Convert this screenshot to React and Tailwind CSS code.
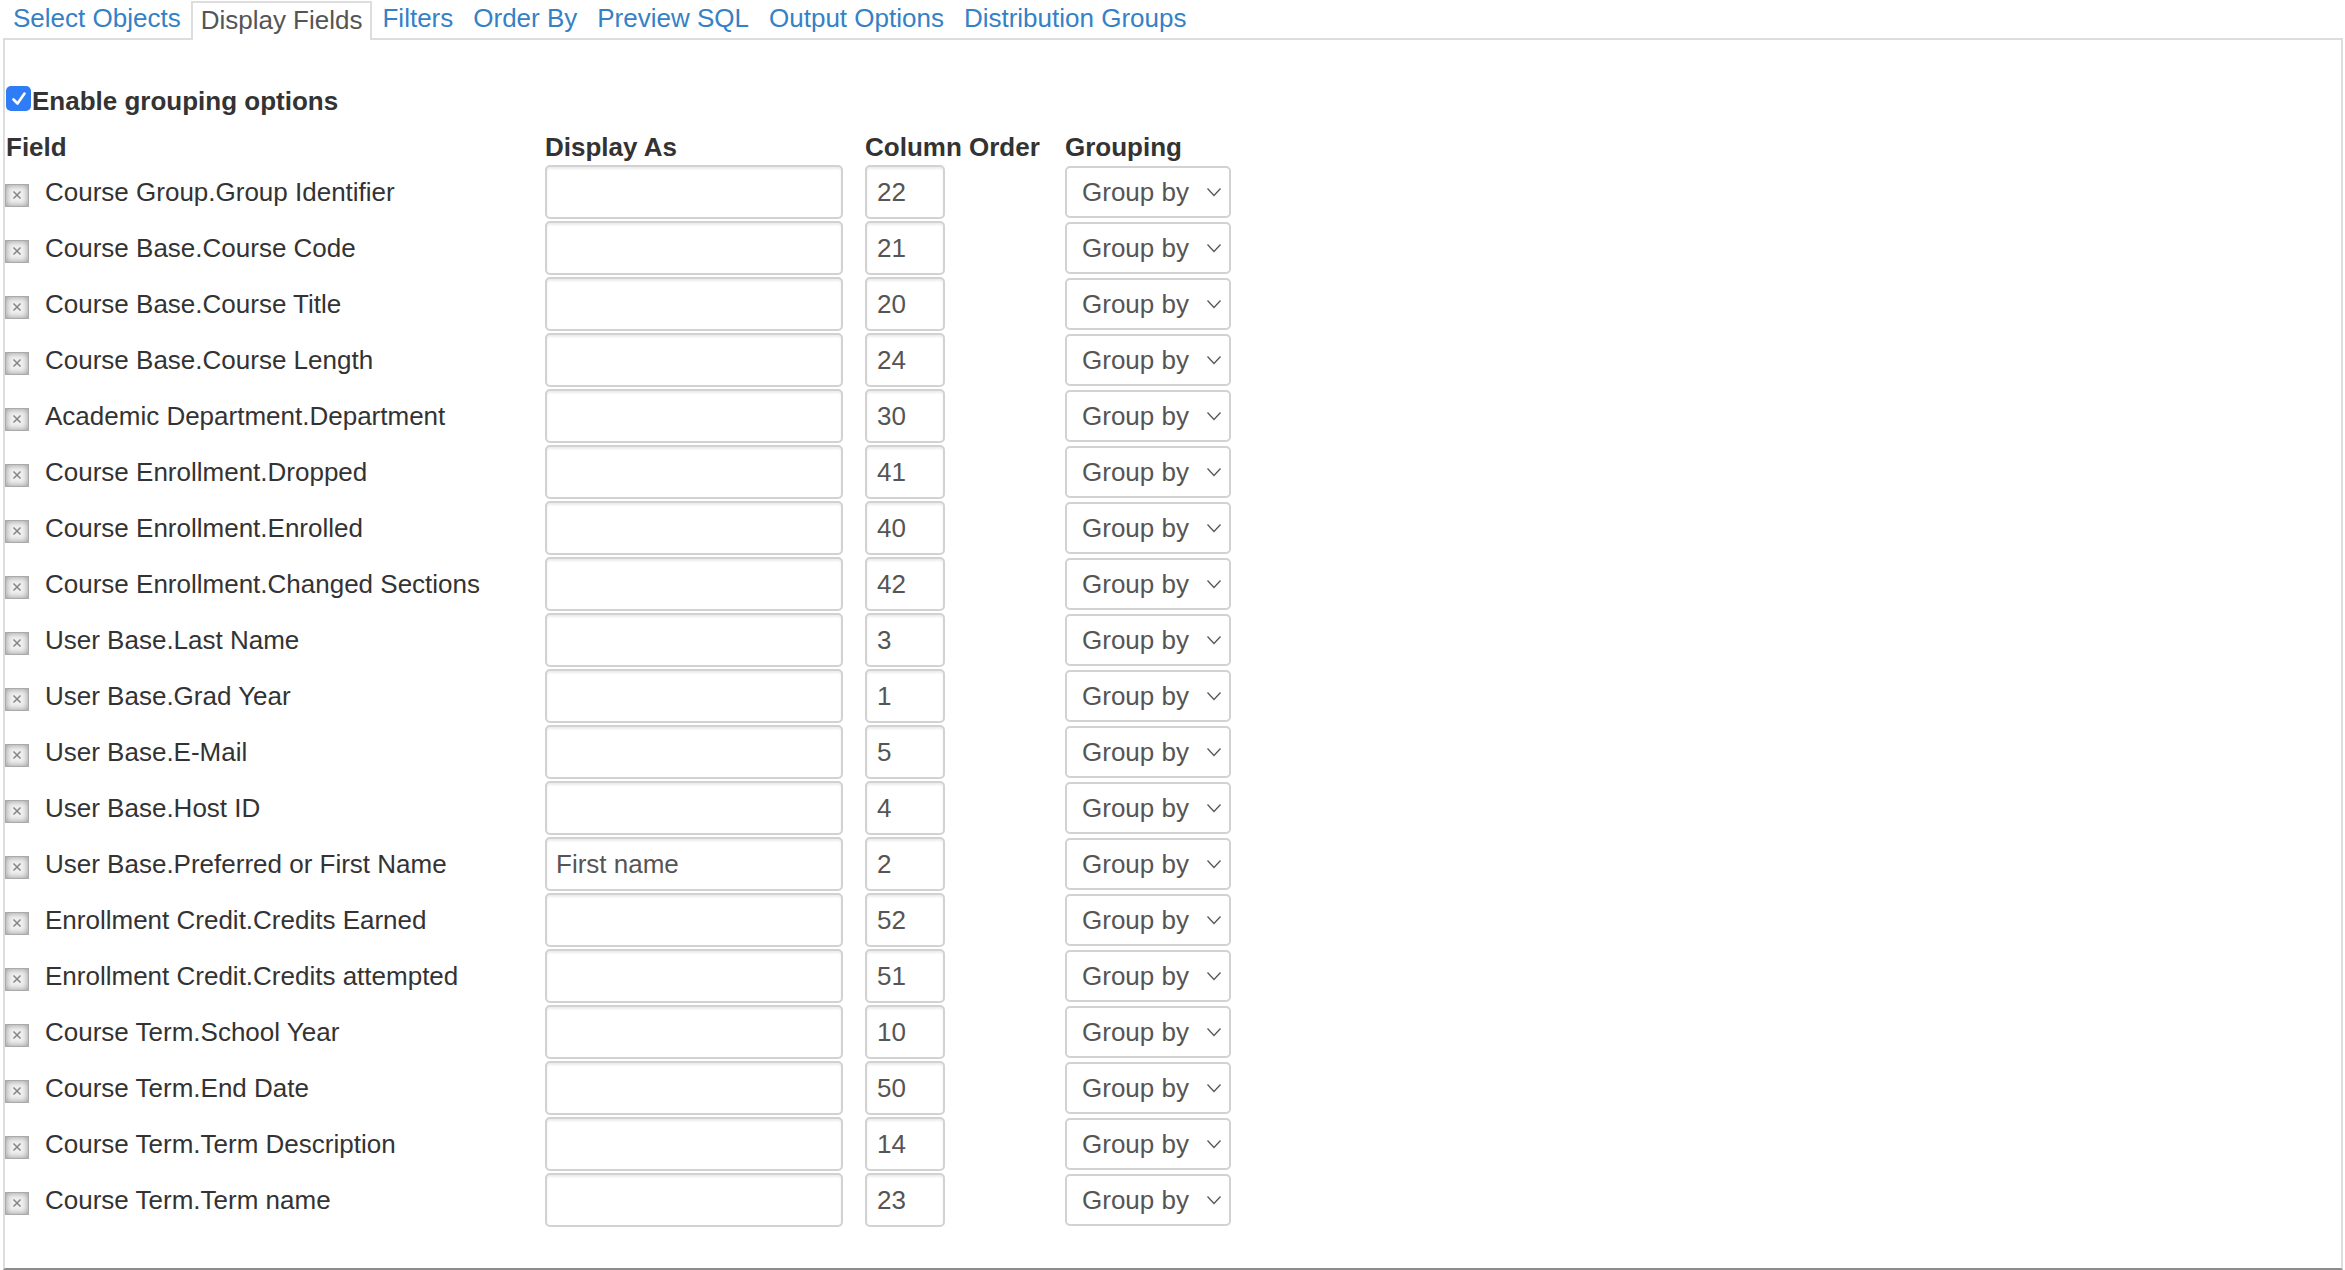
import React from "react";

const tabs = [
  "Select Objects",
  "Display Fields",
  "Filters",
  "Order By",
  "Preview SQL",
  "Output Options",
  "Distribution Groups",
];

const fields = [
  ["Course Group.Group Identifier", "", "22"],
  ["Course Base.Course Code", "", "21"],
  ["Course Base.Course Title", "", "20"],
  ["Course Base.Course Length", "", "24"],
  ["Academic Department.Department", "", "30"],
  ["Course Enrollment.Dropped", "", "41"],
  ["Course Enrollment.Enrolled", "", "40"],
  ["Course Enrollment.Changed Sections", "", "42"],
  ["User Base.Last Name", "", "3"],
  ["User Base.Grad Year", "", "1"],
  ["User Base.E-Mail", "", "5"],
  ["User Base.Host ID", "", "4"],
  ["User Base.Preferred or First Name", "First name", "2"],
  ["Enrollment Credit.Credits Earned", "", "52"],
  ["Enrollment Credit.Credits attempted", "", "51"],
  ["Course Term.School Year", "", "10"],
  ["Course Term.End Date", "", "50"],
  ["Course Term.Term Description", "", "14"],
  ["Course Term.Term name", "", "23"],
];

function RemoveIcon() {
  return (
    <div className="w-[24px] h-[23px] mt-[6px] flex-shrink-0 flex items-center justify-center border border-[#aaa] bg-[#f0f0f0] shadow-[inset_0_0_6px_rgba(0,0,0,0.4)]">
      <svg width="12" height="12" viewBox="0 0 12 12">
        <path d="M2.5 2.5L9.5 9.5M9.5 2.5L2.5 9.5" stroke="#858585" strokeWidth="1.5" />
      </svg>
    </div>
  );
}

function Row({ name, display, order }) {
  return (
    <div className="flex items-center h-[56px]">
      <div className="w-[540px] flex items-center">
        <RemoveIcon />
        <span className="ml-[16px] text-[26px] text-[#333]">{name}</span>
      </div>
      <div className="w-[320px]">
        <div className="w-[298px] h-[54px] border-2 border-[#d2d2d2] rounded-[5px] shadow-[inset_0_2px_2px_rgba(0,0,0,0.08)] bg-white flex items-center px-[9px] text-[26px] text-[#555]">
          {display}
        </div>
      </div>
      <div className="w-[200px]">
        <div className="w-[80px] h-[54px] border-2 border-[#d2d2d2] rounded-[5px] shadow-[inset_0_2px_2px_rgba(0,0,0,0.08)] bg-white flex items-center px-[10px] text-[26px] text-[#555]">
          {order}
        </div>
      </div>
      <div className="w-[166px] h-[52px] border-2 border-[#d2d2d2] rounded-[5px] bg-white flex items-center justify-between pl-[15px] pr-[7px] text-[26px] text-[#555]">
        <span>Group by</span>
        <svg width="16" height="10" viewBox="0 0 16 10">
          <path d="M1.5 1.5L8 8.5L14.5 1.5" fill="none" stroke="#555" strokeWidth="1.3" />
        </svg>
      </div>
    </div>
  );
}

export default function App() {
  return (
    <div className="w-[2345px] h-[1270px] flex flex-col pl-[3px] pr-[2px] bg-white font-['Liberation_Sans',Arial,sans-serif]">
      {/* Tabs */}
      <div className="flex items-end h-[38px] flex-shrink-0">
        {tabs.map((tab) =>
          tab === "Display Fields" ? (
            <div
              key={tab}
              className="relative z-10 -mb-[2px] h-[39px] px-[8px] pt-[3px] border-2 border-b-0 border-[#ddd] bg-white text-[26px] leading-[28px] text-[#555]"
            >
              {tab}
            </div>
          ) : (
            <div
              key={tab}
              className="h-[39px] -mb-[2px] px-[10px] pt-[3px] text-[26px] leading-[28px] text-[#3581c5]"
            >
              {tab}
            </div>
          )
        )}
      </div>

      {/* Panel */}
      <div className="flex-1 border-2 border-[#ddd] border-b-[#8c8c8c]">
        <div className="mt-[49px] flex items-center h-[25px]">
          <div className="w-[25px] h-[25px] -mt-[6px] ml-[1px] rounded-[5px] bg-[#2f7df6] flex items-center justify-center">
            <svg width="18" height="18" viewBox="0 0 18 18">
              <path d="M3.5 9.5L7.5 13.5L14.5 3.5" fill="none" stroke="white" strokeWidth="2.6" strokeLinecap="round" strokeLinejoin="round" />
            </svg>
          </div>
          <span className="ml-[1px] text-[26px] font-bold text-[#333]">Enable grouping options</span>
        </div>

        <div className="mt-[18px] flex items-start h-[32px] leading-[30px] text-[26px] font-bold text-[#333]">
          <div className="w-[540px] pl-[1px]">Field</div>
          <div className="w-[320px]">Display As</div>
          <div className="w-[200px]">Column Order</div>
          <div>Grouping</div>
        </div>

        {fields.map(([name, display, order]) => (
          <Row key={name} name={name} display={display} order={order} />
        ))}
      </div>
    </div>
  );
}
